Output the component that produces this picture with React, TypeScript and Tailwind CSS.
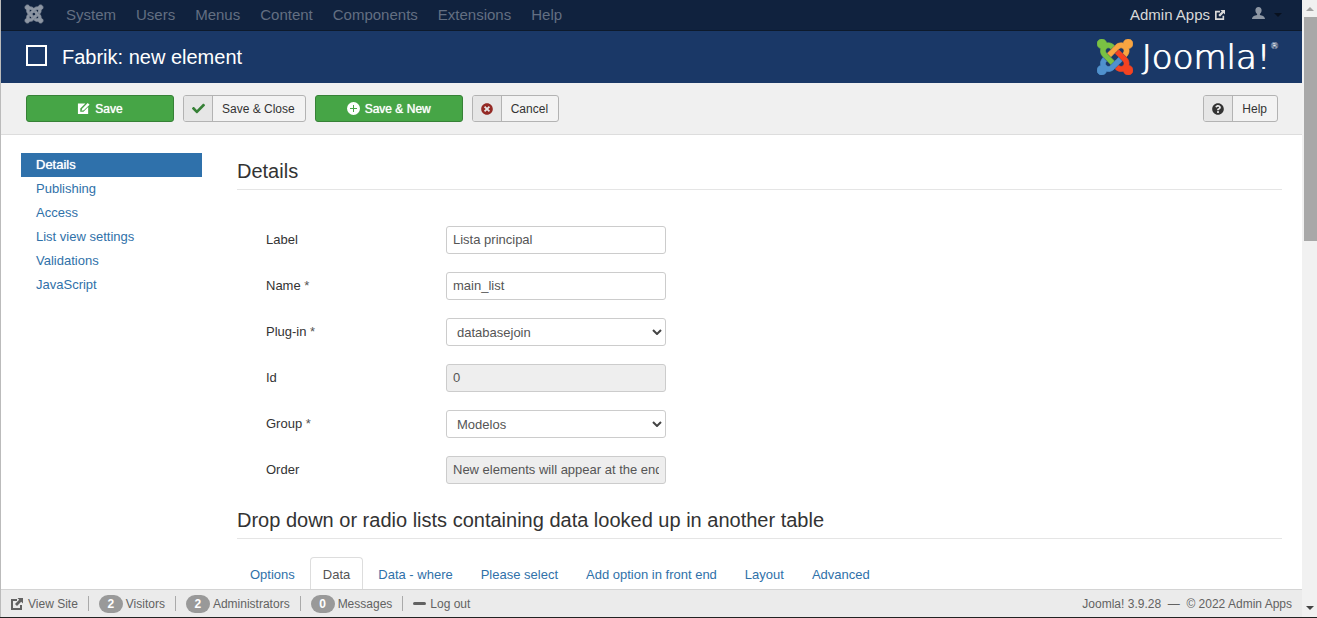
import type { ReactNode } from "react";
import { FaCheck, FaTimesCircle, FaQuestionCircle } from "react-icons/fa";

const JOOMLA = [
  { fill: "#7ac143", d: "M.6 92.1C.6 58.8 27.4 32 60.4 32c30 0 54.5 21.9 59.2 50.2 32.6-7.6 67.1.6 96.5 30l-44.3 44.3c-20.5-20.5-42.6-16.3-55.4-3.5-14.3 14.3-14.3 37.9 0 52.2l99.5 99.5-44 44.3c-87.7-87.2-49.7-49.7-99.8-99.7-26.8-26.5-35-64.8-24.8-98.9C20.4 144.6.6 120.7.6 92.1z" },
  { fill: "#f9a541", d: "M130.1 208.5l44.3 44.3c10-10 89.7-89.7 99.7-99.8 14.3-14.3 37.6-14.3 51.9 0 12.8 12.8 17 35-3.5 55.4l44 44.3c31.2-31.2 38.5-67.6 28.9-101.2 29.2-4.1 51.9-29.2 51.9-59.5 0-33.2-26.8-60.1-59.8-60.1-30.3 0-55.4 22.5-59.5 51.6-33.8-9.9-71.7-1.5-98.3 25.1-18.3 19.1-71.1 71.5-99.6 99.9z" },
  { fill: "#f44321", d: "M396.4 360.7c8.2-32.7-.9-68.5-26.3-93.9-11.8-12.2 5 4.7-99.5-99.7l-44.3 44.3 99.7 99.7c14.3 14.3 14.3 37.6 0 51.9-12.8 12.8-35 17-55.4-3.5l-44 44.3c27.6 30.2 68 38.8 102.7 28 5.5 27.4 29.7 48.1 58.9 48.1 33 0 59.8-26.8 59.8-60.1 0-30.2-22.5-55-51.6-59.1z" },
  { fill: "#5091cd", d: "M312.1 307.6l-44-44.3c-87 86.4-50.4 50.4-99.7 99.8-14.3 14.3-37.6 14.3-51.9 0-13.1-13.4-16.9-35.3 3.2-55.4l-44-44.3c-30.2 30.2-38 65.2-29.5 98.3-26.7 6-46.2 29.9-46.2 58.2C0 453.2 26.8 480 59.8 480c28.6 0 52.5-19.8 58.6-46.7 32.7 8.2 68.5-.6 94.2-26 32.1-32 12.2-12.4 99.5-99.7z" },
];

function JoomlaMark({ className, mono = false }: { className: string; mono?: boolean }) {
  return (
    <svg viewBox="0 32 448 448" className={className} aria-hidden="true">
      {JOOMLA.map((p) => (
        <path
          key={p.fill}
          d={p.d}
          fill={mono ? "currentColor" : p.fill}
          stroke={mono ? "currentColor" : p.fill}
          strokeWidth={mono ? 22 : 8}
        />
      ))}
    </svg>
  );
}

function EditIcon() {
  return (
    <svg viewBox="0 0 14 14" className="size-[13px]" aria-hidden="true">
      <path d="M1 1.500h8L3.500 7v3.500H7L12 5.500V13H1z" fill="currentColor" />
      <path d="M5 9.500l.5-2.300L11.500 1l2 2-6.200 6z" fill="currentColor" />
    </svg>
  );
}

function OutIcon({ className }: { className: string }) {
  return (
    <svg viewBox="0 0 12 12" className={className} aria-hidden="true">
      <path d="M6 2H1v9h9V7" fill="none" stroke="currentColor" strokeWidth="2" />
      <path d="M6.500 0H12v5.500l-1.800-1.800L6 8 4 6l4.200-4.200z" fill="currentColor" />
    </svg>
  );
}

function PlusIcon() {
  return (
    <svg viewBox="0 0 13 13" className="size-[13px]" aria-hidden="true">
      <circle cx="6.500" cy="6.500" r="6.500" fill="currentColor" />
      <path d="M6.500 3v7M3 6.500h7" stroke="#46a546" strokeWidth="1" />
    </svg>
  );
}

function UserIcon() {
  return (
    <svg viewBox="0 0 13 12" className="h-3 w-[13px]" aria-hidden="true">
      <path d="M6.500 0C4.400 0 3.400 1.400 3.400 3.300c0 1.700.8 3 1.700 3.700v1C2.600 8.500 0 9.500 0 12h13c0-2.500-2.600-3.500-5.100-4V7c.9-.7 1.700-2 1.700-3.700C9.600 1.400 8.600 0 6.500 0z" fill="currentColor" />
    </svg>
  );
}

function SuccessButton({ icon, children }: { icon: ReactNode; children: ReactNode }) {
  return (
    <button className="flex h-[27px] w-[148px] items-center justify-center gap-[5px] rounded-[3px] border border-[#378137] bg-[#46a546] text-xs text-white [text-shadow:0_0_1px_#fff]">
      {icon}
      {children}
    </button>
  );
}

function ToolButton({ icon, children }: { icon: ReactNode; children: ReactNode }) {
  return (
    <button className="flex h-[27px] items-stretch overflow-hidden rounded-[3px] border border-[#b3b3b3] bg-[#f3f3f3] text-xs text-[#333]">
      <span className="flex w-[29px] items-center justify-center border-r border-[#b3b3b3] bg-[#e6e6e6]">{icon}</span>
      <span className="flex items-center pr-[10px] pl-[9px]">{children}</span>
    </button>
  );
}

const MENUS = ["System", "Users", "Menus", "Content", "Components", "Extensions", "Help"];
const SECTIONS = ["Details", "Publishing", "Access", "List view settings", "Validations", "JavaScript"];
const TABS = ["Options", "Data", "Data - where", "Please select", "Add option in front end", "Layout", "Advanced"];

type Field = { id: string; label: string; value: string; kind: "text" | "select" | "readonly"; required?: boolean };
const FIELDS: Field[] = [
  { id: "label", label: "Label", value: "Lista principal", kind: "text" },
  { id: "name", label: "Name", value: "main_list", kind: "text", required: true },
  { id: "plugin", label: "Plug-in", value: "databasejoin", kind: "select", required: true },
  { id: "id", label: "Id", value: "0", kind: "readonly" },
  { id: "group", label: "Group", value: "Modelos", kind: "select", required: true },
  { id: "order", label: "Order", value: "New elements will appear at the end", kind: "readonly" },
];

const CONTROL = "h-7 w-[220px] rounded-[3px] border border-[#ccc] text-[13px] text-[#555]";

function FieldRow({ field }: { field: Field }) {
  return (
    <div className="flex items-start">
      <label htmlFor={field.id} className="w-[180px] pt-[5px] leading-[18px] text-[#333]">
        {field.label}
        {field.required && <span className="text-[#555]"> *</span>}
      </label>
      {field.kind === "select" ? (
        <div className="relative">
          <select id={field.id} defaultValue={field.value} className={`${CONTROL} appearance-none bg-white pt-px pl-[10px]`}>
            <option>{field.value}</option>
          </select>
          <svg viewBox="0 0 10 6" className="pointer-events-none absolute top-[11px] right-1 h-[6px] w-[10px]" aria-hidden="true">
            <path d="M1 1l4 4 4-4" fill="none" stroke="#444" strokeWidth="2" />
          </svg>
        </div>
      ) : (
        <input
          id={field.id}
          defaultValue={field.value}
          readOnly={field.kind === "readonly"}
          className={`${CONTROL} px-[6px] pb-[2px] ${field.kind === "readonly" ? "bg-[#eee]" : "bg-white"}`}
        />
      )}
    </div>
  );
}

function Count({ value, label }: { value: number; label: string }) {
  return (
    <a href="#" className="flex items-center gap-[3px]">
      <span className="flex h-[18px] w-6 items-center justify-center rounded-full bg-[#999] text-xs font-bold text-white">{value}</span>
      {label}
    </a>
  );
}

const Divider = () => <span className="h-[15px] w-px bg-[#aaa]" />;

export default function App() {
  return (
    <div className="flex h-screen border-b border-[#222] bg-white font-['Liberation_Sans',Arial,sans-serif] text-[13px] leading-[18px] text-[#333]">
      <div className="flex min-w-0 flex-1 flex-col border-l border-[#bbb]">
        <nav className="flex h-[31px] shrink-0 items-center border-b border-[#0d1a2c] bg-[#10223e] pr-5 pl-6 text-[15px] text-[#636f82]">
          <a href="#" aria-label="Control panel" className="mr-[23px] mb-[2px] text-[#8d96a3]">
            <JoomlaMark mono className="size-[18px] overflow-visible" />
          </a>
          <div className="flex flex-1 gap-5">
            {MENUS.map((m) => (
              <a key={m} href="#">{m}</a>
            ))}
          </div>
          <a href="#" className="flex items-center gap-[5px] text-[#d9d9d9]">
            Admin Apps <OutIcon className="size-[10px]" />
          </a>
          <button aria-label="User menu" className="ml-[27px] flex items-center gap-[9px] text-[#8d96a3]">
            <span className="mb-1">
              <UserIcon />
            </span>
            <svg viewBox="0 0 8 4" className="h-1 w-2" aria-hidden="true">
              <path d="M0 0h8L4 4z" fill="#08111f" />
            </svg>
          </button>
        </nav>

        <header className="flex h-[52px] shrink-0 items-center bg-[#1a3867] pr-6 pl-[25px] text-white">
          <span className="mr-[15px] mb-1 size-[21px] border-2 border-white" />
          <h1 className="flex-1 text-xl">Fabrik: new element</h1>
          <div className="flex items-center gap-2">
            <JoomlaMark className="size-9" />
            <span className="flex items-start font-['DejaVu_Sans',sans-serif] text-[34px] leading-9 font-extralight [text-shadow:1px_0_0_#fff]">
              Joomla!<span className="text-[8px] leading-4">®</span>
            </span>
          </div>
        </header>

        <div className="flex h-[52px] shrink-0 items-center gap-[9px] border-b border-[#ddd] bg-[#f0f0f0] pr-6 pl-[25px]">
          <SuccessButton icon={<EditIcon />}>Save</SuccessButton>
          <ToolButton icon={<FaCheck className="size-[13px] text-[#378137]" />}>Save &amp; Close</ToolButton>
          <SuccessButton icon={<PlusIcon />}>Save &amp; New</SuccessButton>
          <ToolButton icon={<FaTimesCircle className="size-3 text-[#942a25]" />}>Cancel</ToolButton>
          <div className="ml-auto">
            <ToolButton icon={<FaQuestionCircle className="size-3" />}>Help</ToolButton>
          </div>
        </div>

        <div className="flex min-h-0 flex-1 gap-[35px] overflow-hidden pr-5 pl-5">
          <nav className="mt-[18px] flex w-[181px] shrink-0 flex-col">
            {SECTIONS.map((s, i) => (
              <a key={s} href="#" className={`px-[15px] py-[3px] ${i === 0 ? "bg-[#2f71ab] text-white [text-shadow:0_0_1px_#fff]" : "text-[#3071a9]"}`}>
                {s}
              </a>
            ))}
          </nav>
          <main className="min-w-0 flex-1">
            <h2 className="mt-[18px] border-b border-[#e5e5e5] text-xl leading-9">Details</h2>
            <form className="mt-9 ml-[29px] flex flex-col gap-[18px]">
              {FIELDS.map((f) => (
                <FieldRow key={f.id} field={f} />
              ))}
            </form>
            <h2 className="mt-[18px] border-b border-[#e5e5e5] text-xl leading-9">
              Drop down or radio lists containing data looked up in another table
            </h2>
            <div className="mt-[18px] flex gap-[2px]">
              {TABS.map((t) => (
                <a
                  key={t}
                  href="#"
                  className={`rounded-t border border-b-0 px-3 py-2 ${t === "Data" ? "border-[#ddd] text-[#555]" : "border-transparent text-[#3071a9]"}`}
                >
                  {t}
                </a>
              ))}
            </div>
          </main>
        </div>

        <footer className="flex h-7 shrink-0 items-center gap-[10px] border-t border-[#d4d4d4] bg-[#ebebeb] pr-[10px] pl-[10px] text-xs text-[#626262]">
          <a href="#" className="flex items-center gap-[5px]">
            <OutIcon className="size-3" />
            View Site
          </a>
          <Divider />
          <Count value={2} label="Visitors" />
          <Divider />
          <Count value={2} label="Administrators" />
          <Divider />
          <Count value={0} label="Messages" />
          <Divider />
          <a href="#" className="flex items-center gap-1">
            <span className="h-[3px] w-[13px] rounded-sm bg-[#626262]" />
            Log out
          </a>
          <p className="ml-auto whitespace-pre">Joomla! 3.9.28  —  © 2022 Admin Apps</p>
        </footer>
      </div>

      <div className="flex w-[15px] shrink-0 flex-col items-center bg-[#f1f1f1]" aria-hidden="true">
        <svg viewBox="0 0 15 17" className="h-[17px] w-[15px] shrink-0">
          <path d="M4 11h8L8 7z" fill="#a3a3a3" />
        </svg>
        <div className="h-56 w-[13px] shrink-0 self-end bg-[#a8a8a8]" />
        <svg viewBox="0 0 15 17" className="mt-auto h-[17px] w-[15px] shrink-0">
          <path d="M4 6h8l-4 4z" fill="#444" />
        </svg>
      </div>
    </div>
  );
}
